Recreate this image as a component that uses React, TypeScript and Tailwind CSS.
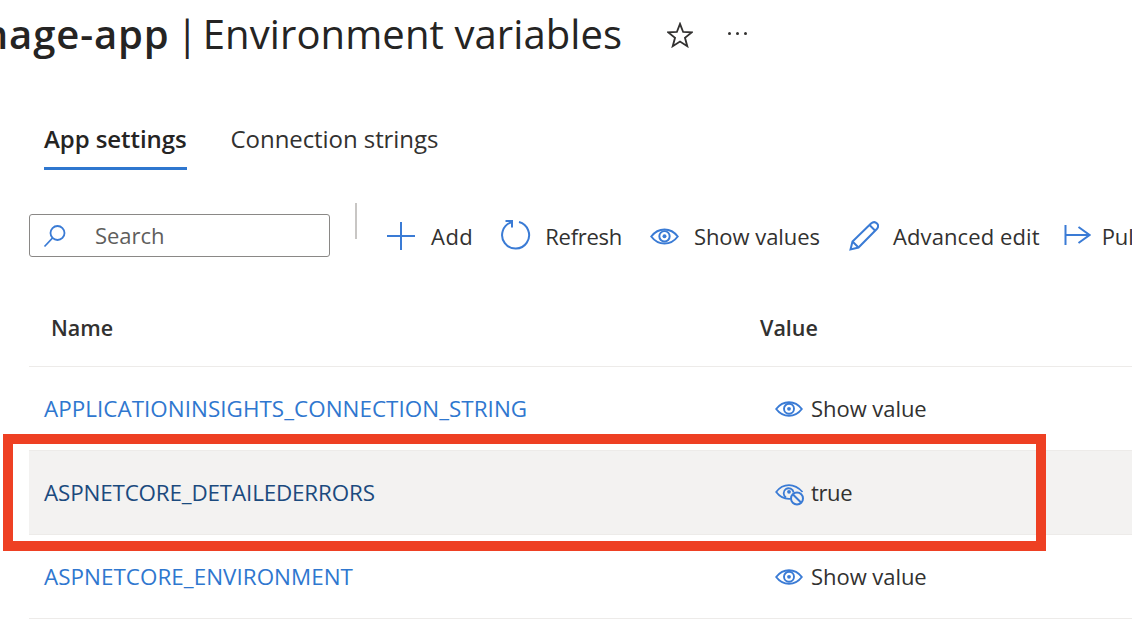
const BLUE = "#3a7bd5";

function Eye({ className }: { className: string }) {
  return (
    <svg viewBox="0 0 28 16" className={className} fill="none" stroke="#3a7bd5" strokeWidth="1.9">
      <path d="M1.2 8C4.5 3.6 9 1.2 14 1.2S23.5 3.6 26.8 8C23.5 12.4 19 14.8 14 14.8S4.5 12.4 1.2 8Z" />
      <circle cx="14" cy="7.8" r="5" />
      <circle cx="14" cy="7.8" r="1.9" fill="#3a7bd5" stroke="none" />
    </svg>
  );
}

function EyeOff() {
  return (
    <svg viewBox="0 0 29 22" className="w-[29px] h-[22px] translate-y-[2px] shrink-0 -mr-[1px]" fill="none" stroke="#3a7bd5" strokeWidth="1.8">
      <path d="M15.5 14.8C9.5 15.3 4.5 12.5 1.2 8C4.5 3.6 9 1.2 14 1.2S23.5 3.6 27.5 8" />
      <path d="M11 13.5A5 5 0 1 1 18.6 8.5" />
      <circle cx="14" cy="7.8" r="1.9" fill="#3a7bd5" stroke="none" />
      <circle cx="22" cy="14.5" r="6" fill="#f3f2f1" strokeWidth="2" />
      <path d="M18 10.5 26 18.5" strokeWidth="2" />
    </svg>
  );
}

function ToolButton({ icon, label, className, labelClass }: { icon: React.ReactNode; label: string; className: string; labelClass?: string }) {
  return (
    <div className={"flex items-center shrink-0 " + className}>
      {icon}
      <span className={"whitespace-nowrap " + (labelClass ?? "")}>{label}</span>
    </div>
  );
}

function Row({ name, value, shaded }: { name: string; value: string; shaded?: boolean }) {
  return (
    <div className={"flex items-center h-[84px] pl-[15px] border-b border-[#edebe9] " + (shaded ? "bg-[#f3f2f1] text-[#1b4a7e]" : "text-[#2f77cf]")}>
      <div className={"w-[731px] shrink-0 whitespace-nowrap text-[22.4px] " + (shaded ? "tracking-[-0.15px]" : "tracking-[0.05px]")}>{name}</div>
      <div className={"flex items-center gap-[8px] text-[22px] text-[#323130] " + (shaded ? "tracking-[-0.4px]" : "tracking-[-0.05px]")}>
        {shaded ? <EyeOff /> : <Eye className="w-[28px] h-[16px]" />}
        <span>{value}</span>
      </div>
    </div>
  );
}

export default function App() {
  return (
    <div className="relative w-[1132px] h-[628px] overflow-hidden bg-white text-[#323130] font-['Open_Sans','Noto_Sans',sans-serif]">
      <header className="flex items-center h-[70px] -ml-[30px]">
        <h1 className="text-[40px] leading-[70px] -translate-y-[1px] tracking-[0.1px] text-[#252423] font-normal whitespace-nowrap">
          <span className="font-semibold tracking-[0.9px]">mage-app</span>
          <span className="[word-spacing:-4px]"> </span>|<span className="[word-spacing:-6px]"> </span>Environment variables
        </h1>
        <svg viewBox="0 0 24 24" className="w-[26px] h-[26px] ml-[45px]" fill="none" stroke="#323130" strokeWidth="1.7">
          <path d="M12 1.8 14.9 9.2 22.8 9.6 16.6 14.6 18.7 22.3 12 18 5.3 22.3 7.4 14.6 1.2 9.6 9.1 9.2Z" />
        </svg>
        <div className="flex gap-[5px] ml-[35px] -translate-y-[2px]">
          <span className="w-[3px] h-[3px] rounded-full bg-[#323130]" />
          <span className="w-[3px] h-[3px] rounded-full bg-[#323130]" />
          <span className="w-[3px] h-[3px] rounded-full bg-[#323130]" />
        </div>
      </header>

      <nav className="flex mt-[47px] pl-[44px] gap-[44px] text-[24px] leading-[44px] tracking-[-0.07px]">
        <div className="relative font-semibold text-[#252423] h-[53px] border-b-[3px] border-[#2f77cf]">App settings</div>
        <div className="text-[#323130]">Connection strings</div>
      </nav>

      <div className="flex mt-[33px] pl-[29px] h-[54px] text-[22px] tracking-[-0.05px] text-[#323130]">
        <div className="flex items-center w-[301px] h-[43px] mt-[11px] shrink-0 rounded-[3px] border border-[#8a8886] pl-[13px]">
          <svg viewBox="0 0 24 24" className="w-[24px] h-[24px] shrink-0" fill="none" stroke={BLUE} strokeWidth="1.8">
            <circle cx="14.5" cy="9" r="7" />
            <path d="M9.5 14 1.5 22.5" />
          </svg>
          <span className="ml-[28px] text-[#605e5c]">Search</span>
        </div>
        <div className="w-[2px] h-[36px] bg-[#c8c6c4] ml-[25px] shrink-0" />
        <div className="flex items-center h-[54px] mt-[11px] -translate-y-[5px]">
          <ToolButton
            className="ml-[29px] gap-[15px]"
            label="Add"
            labelClass="tracking-[0.5px]"
            icon={
              <svg viewBox="0 0 30 30" className="w-[30px] h-[30px]" fill="none" stroke={BLUE} strokeWidth="2">
                <path d="M15 1V29M1 15H29" />
              </svg>
            }
          />
          <ToolButton
            className="ml-[28px] gap-[14px]"
            label="Refresh"
            labelClass="tracking-[-0.3px]"
            icon={
              <svg viewBox="0 0 30 30" className="w-[30px] h-[30px] -translate-y-[1px]" fill="none" stroke={BLUE} strokeWidth="2">
                <path d="M18 2A13.5 13.5 0 1 1 10.5 2.2" />
                <path d="M4.5 1H11V7.5" />
              </svg>
            }
          />
          <ToolButton className="ml-[28px] gap-[15px]" label="Show values" icon={<Eye className="w-[29px] h-[17px]" />} />
          <ToolButton
            className="ml-[29px] gap-[14px]"
            label="Advanced edit"
            labelClass="tracking-[0.1px]"
            icon={
              <svg viewBox="0 0 30 30" className="w-[30px] h-[30px]" fill="none" stroke={BLUE} strokeWidth="2">
                <path d="M1.5 28.5 3.5 20.5 22 2.5C24 .8 26.5 1 28 2.5S29.5 6 27.8 8L9.5 26.5Z" />
                <path d="M3.5 20.5 9.5 26.5M20.5 4 26.5 10" />
              </svg>
            }
          />
          <ToolButton
            className="ml-[24px] gap-[11px]"
            label="Pull"
            icon={
              <svg viewBox="0 0 27 22" className="w-[27px] h-[22px] -translate-y-[1px]" fill="none" stroke={BLUE} strokeWidth="2">
                <path d="M1.5 1V21M2 11H25.5M14.5 3 25.5 11 14.5 19" />
              </svg>
            }
          />
        </div>
      </div>

      <div className="ml-[29px] mt-[44px]">
        <div className="flex items-center h-[66px] pl-[22px] pb-[11px] border-b border-[#edebe9] text-[21.5px] font-semibold text-[#323130]">
          <div className="w-[709px]">Name</div>
          <div>Value</div>
        </div>
        <Row name="APPLICATIONINSIGHTS_CONNECTION_STRING" value="Show value" />
        <Row name="ASPNETCORE_DETAILEDERRORS" value="true" shaded />
        <Row name="ASPNETCORE_ENVIRONMENT" value="Show value" />
      </div>

      <div className="absolute left-[3px] top-[434px] w-[1043px] h-[117px] border-[10px] border-[#ee4023]" />
    </div>
  );
}
